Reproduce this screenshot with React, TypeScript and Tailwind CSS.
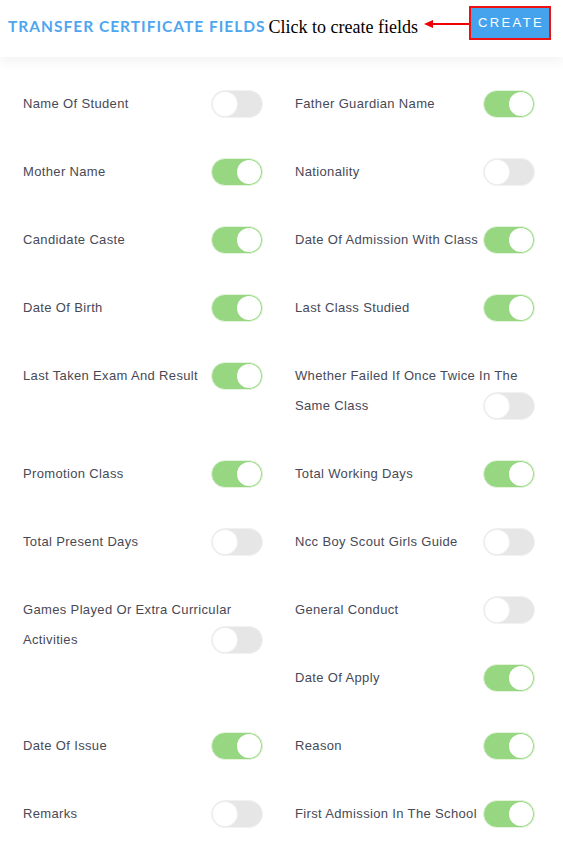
import React from "react";

type Field = { label: string; on: boolean; span?: boolean };

const fields: Field[] = [
  { label: "Name Of Student", on: false },
  { label: "Father Guardian Name", on: true },
  { label: "Mother Name", on: true },
  { label: "Nationality", on: false },
  { label: "Candidate Caste", on: true },
  { label: "Date Of Admission With Class", on: true },
  { label: "Date Of Birth", on: true },
  { label: "Last Class Studied", on: true },
  { label: "Last Taken Exam And Result", on: true },
  { label: "Whether Failed If Once Twice In The Same Class", on: false },
  { label: "Promotion Class", on: true },
  { label: "Total Working Days", on: true },
  { label: "Total Present Days", on: false },
  { label: "Ncc Boy Scout Girls Guide", on: false },
  { label: "Games Played Or Extra Curricular Activities", on: false, span: true },
  { label: "General Conduct", on: false },
  { label: "Date Of Apply", on: true },
  { label: "Date Of Issue", on: true },
  { label: "Reason", on: true },
  { label: "Remarks", on: false },
  { label: "First Admission In The School", on: true },
];

function Toggle({ on }: { on: boolean }) {
  return (
    <span
      className={
        "float-right mt-[1px] flex h-[28px] w-[52px] items-center rounded-full border p-[1px] " +
        (on
          ? "justify-end border-[#e3f3dc] bg-[#98d781]"
          : "justify-start border-[#f1f1f1] bg-[#e6e6e6]")
      }
    >
      <span
        className={
          "block h-[24px] w-[24px] rounded-full bg-white " +
          (on ? "" : "shadow-[0_0_0_1px_#eeeeee]")
        }
      />
    </span>
  );
}

export default function App() {
  return (
    <div className="min-h-screen bg-white" style={{ fontFamily: '"Liberation Sans", Arial, sans-serif' }}>
      <header className="relative flex h-[57px] items-start pl-[8px] pr-[12px] pt-[6px] shadow-[0_6px_10px_rgba(0,0,0,0.045)]">
        <div className="flex h-[34px] w-full items-center">
          <h1
            className="mt-[8px] text-[15.5px] font-bold tracking-[1px] text-[#4ea6f1]"
            style={{ fontFamily: '"Lato", "Liberation Sans", sans-serif' }}
          >
            TRANSFER CERTIFICATE FIELDS
          </h1>
          <span
            className="ml-[3px] mt-[8px] text-[18px] text-black"
            style={{ fontFamily: '"Liberation Serif", "Times New Roman", serif' }}
          >
            Click to create fields
          </span>
          <div className="ml-auto flex items-center">
            <svg width="45" height="10" viewBox="0 0 45 10" className="mt-[1px]">
              <line x1="6" y1="5" x2="45" y2="5" stroke="#ee0000" strokeWidth="2" />
              <polygon points="0,5 9,1 9,9" fill="#ee0000" />
            </svg>
            <button className="flex h-[34px] w-[82px] items-center justify-center border-2 border-[#ee1111] bg-[#45a3ee] pl-[2px] text-[13px] tracking-[2.4px] text-white">
              CREATE
            </button>
          </div>
        </div>
      </header>
      <div className="ml-[7px] grid w-[544px] grid-cols-2 pt-[32px]">
        {fields.map((f) => (
          <div
            key={f.label}
            className={
              "flow-root px-[16px] pb-[38px] text-[13px] leading-[30px] tracking-[0.35px] text-[#474956] " +
              (f.span ? "row-span-2" : "")
            }
          >
            {f.label}
            <Toggle on={f.on} />
          </div>
        ))}
      </div>
    </div>
  );
}
